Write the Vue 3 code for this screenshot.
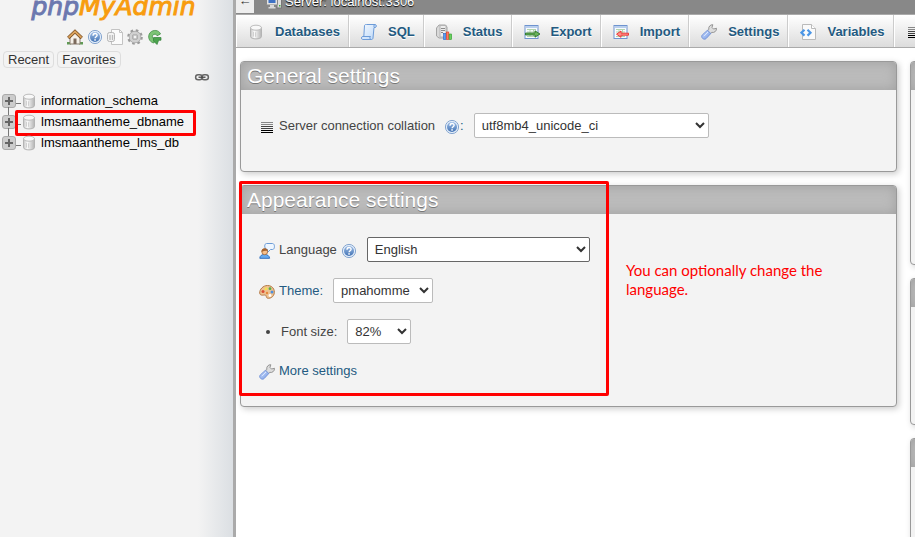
<script setup>
import { ref } from 'vue'

const databases = ['information_schema', 'lmsmaantheme_dbname', 'lmsmaantheme_lms_db']
const marked = 'lmsmaantheme_dbname'

const shortcuts = [
  { icon: 'home', label: 'Home' },
  { icon: 'help', label: 'Documentation' },
  { icon: 'docs', label: 'SQL documentation' },
  { icon: 'gear', label: 'Panel settings' },
  { icon: 'reload', label: 'Reload' }
]

const tabs = [
  { icon: 'db', label: 'Databases' },
  { icon: 'sql', label: 'SQL' },
  { icon: 'status', label: 'Status' },
  { icon: 'export', label: 'Export' },
  { icon: 'import', label: 'Import' },
  { icon: 'wrench', label: 'Settings' },
  { icon: 'vars', label: 'Variables' },
  { icon: 'lines', label: 'Charsets' }
]

const collation = ref('utf8mb4_unicode_ci')
const language = ref('English')
const theme = ref('pmahomme')
const fontSize = ref('82%')
</script>

<template>
  <svg class="sprite" aria-hidden="true">
    <defs>
      <linearGradient id="metal" x1="0" x2="1" y1="0" y2="0">
        <stop offset="0" stop-color="#c4c4c4" />
        <stop offset=".35" stop-color="#fafafa" />
        <stop offset="1" stop-color="#b4b4b4" />
      </linearGradient>
      <linearGradient id="blue" x1="0" x2="0" y1="0" y2="1">
        <stop offset="0" stop-color="#9dbde6" />
        <stop offset="1" stop-color="#4474b5" />
      </linearGradient>
      <linearGradient id="handle" x1="0" x2="1" y1="0" y2="1">
        <stop offset="0" stop-color="#c3d6fa" />
        <stop offset="1" stop-color="#7c9fe6" />
      </linearGradient>
      <linearGradient id="paper" x1="0" x2="1" y1="0" y2="1">
        <stop offset="0" stop-color="#f4f9ff" />
        <stop offset="1" stop-color="#bcd8f8" />
      </linearGradient>
    </defs>
    <symbol id="home" viewBox="0 0 16 16">
      <path d="M0 15.500V13h4v2.500zM12 15.500V13h4v2.500z" fill="#5f9a54" />
      <path d="M3 8l5-5 5 5v7H3z" fill="#f6f1ea" stroke="#8b7d70" stroke-width="1" />
      <path d="M6.500 15V9.500h3V15z" fill="#7c6a5c" />
      <path d="M1.200 9L8 2.500 14.800 9" fill="none" stroke="#7b4f23" stroke-width="3.200" />
      <path d="M1.500 8.700L8 2.500l6.500 6.200" fill="none" stroke="#dba25c" stroke-width="1.800" />
    </symbol>
    <symbol id="help" viewBox="0 0 16 16">
      <circle cx="8" cy="8" r="6.600" fill="#e3edf9" stroke="#86a6d0" />
      <circle cx="8" cy="8" r="5" fill="url(#blue)" />
      <path d="M6 6.700c0-2.900 4.200-2.800 4.100-.4 0 1.500-2 1.400-2 3" fill="none" stroke="#fff" stroke-width="1.400" />
      <rect x="7.300" y="10.200" width="1.500" height="1.500" fill="#fff" />
    </symbol>
    <symbol id="docs" viewBox="0 0 16 16">
      <path d="M4.500.5h8l3 3v12h-11z" fill="#fbfbfb" stroke="#c3c3c3" />
      <path d="M12.500.5v3h3" fill="none" stroke="#c3c3c3" />
      <rect x=".5" y="3.500" width="7" height="9" rx="2" fill="#f2f2f2" stroke="#b5b5b5" />
      <path d="M3 6v5M5.500 6v5" stroke="#bbb" stroke-width="1.300" />
    </symbol>
    <symbol id="gear" viewBox="0 0 16 16">
      <circle cx="8" cy="8" r="6.500" fill="none" stroke="#9a9a9a" stroke-width="2.600" stroke-dasharray="2.500 2.605" />
      <circle cx="8" cy="8" r="4.300" fill="none" stroke="#a2a2a2" stroke-width="3.800" />
      <circle cx="8" cy="8" r="4.300" fill="none" stroke="#d0d0d0" stroke-width="2.600" />
      <circle cx="8" cy="8" r="2" fill="#f3f3f3" stroke="#999" stroke-width=".7" />
    </symbol>
    <symbol id="reload" viewBox="0 0 16 16">
      <path d="M13.500 5C12 .8 6 .3 3.200 3.600.2 7 1.800 13 6.800 14l1.700-3.700c-4 .2-4.300-5-.5-5.100 1.200 0 1.800.8 2 1.600z" fill="#7cc475" stroke="#3f8d42" stroke-width=".8" />
      <path d="M6.500 8.500h7.500v2.700h-2.300L10 15.500 6.500 12z" fill="#4ba34d" stroke="#32803a" stroke-width=".7" />
    </symbol>
    <symbol id="chain" viewBox="0 0 16 16">
      <rect x="1.600" y="5.700" width="6.600" height="5" rx="2.500" fill="none" stroke="#666" stroke-width="1.500" />
      <rect x="7.800" y="5.700" width="6.600" height="5" rx="2.500" fill="none" stroke="#666" stroke-width="1.500" />
      <path d="M4.500 8.200h7" stroke="#444" stroke-width="1.300" />
    </symbol>
    <symbol id="db" viewBox="0 0 16 16">
      <path d="M2.500 3.500v9c0 3.200 11 3.200 11 0v-9z" fill="url(#metal)" stroke="#b4b4b4" />
      <ellipse cx="8" cy="3.700" rx="5.500" ry="2.500" fill="#f8f8f8" stroke="#bcbcbc" />
      <path d="M5.500 8v4.500M7.500 8.300v4.500" stroke="#d0d0d0" />
    </symbol>
    <symbol id="sql" viewBox="0 0 16 16">
      <path d="M3.500 1.500c.5-1 1-1 2-1h8.500c1.800 0 1.800 3 0 3h-1L12 14c-.2 1.500-1 1.500-2 1.500H1.500c-1.300 0-1.300-3 0-3h1.300z" fill="url(#paper)" stroke="#6c9bd8" />
      <path d="M14 .7c-1.500 0-1.300 2.800-.2 2.800M1.500 12.500h8c-.9.500-.9 2.500.3 2.800" fill="none" stroke="#6c9bd8" />
    </symbol>
    <symbol id="status" viewBox="0 0 16 16">
      <path d="M.5 4L3 1h6.500L11 3v9.500L8 14H3L.5 12z" fill="#d9d9d9" stroke="#a4a4a4" />
      <path d="M4 1.500h6V13H4z" fill="#ededed" stroke="#b4b4b4" />
      <path d="M5 4.500h4M5 6.500h4M5 8.500h2" stroke="#8a8a8a" />
      <rect x="7.500" y="9.500" width="2.500" height="6" fill="#5c9cf2" stroke="#2b64bb" stroke-width=".6" />
      <rect x="10.300" y="8" width="2.500" height="7.500" fill="#ff7b61" stroke="#dc3a22" stroke-width=".6" />
      <rect x="13.100" y="10" width="2.500" height="5.500" fill="#69d15e" stroke="#2c9a2c" stroke-width=".6" />
    </symbol>
    <symbol id="sheet" viewBox="0 0 16 16">
      <rect x="1" y="1.500" width="13" height="13" fill="#f8fbff" stroke="#6e93cf" />
      <path d="M2 3h11" stroke="#b9cfed" stroke-width="2" />
      <path d="M3 5.500h9M3 8h9M3 12.500h9M6 5v8M9.500 5v8" stroke="#b3d3ae" />
    </symbol>
    <symbol id="export" viewBox="0 0 16 16">
      <use href="#sheet" />
      <path d="M1.500 9h9.500V6.800L16 10l-5 3.200V11H1.500z" fill="#6bb35c" stroke="#226c1f" stroke-width=".8" />
    </symbol>
    <symbol id="import" viewBox="0 0 16 16">
      <use href="#sheet" />
      <path d="M15.500 9.200H8V7l-4.500 3.200L8 13.300v-2.100h7.500z" fill="#ff8f89" stroke="#ee2f2c" stroke-width=".9" />
    </symbol>
    <symbol id="wrench" viewBox="0 0 16 16">
      <path d="M7.800 5.500c-.6-2.700 1.500-5 4-4.800L11 3.500 12.500 5l3-.7c.2 2.700-2 4.700-4.900 4.100L9 10 6.200 7z" fill="#ddd" stroke="#8b8b8b" stroke-width=".9" />
      <path d="M6.500 6.200l3.300 3.300-4.600 5c-2.200 2.200-6-1.200-3.900-3.600z" fill="url(#handle)" stroke="#6f90d6" stroke-width=".9" />
      <path d="M3 12.200l4-4.200" stroke="#dfeaff" />
    </symbol>
    <symbol id="vars" viewBox="0 0 16 16">
      <path d="M2.500.5h9l4 4v11h-13z" fill="#fafafa" stroke="#bababa" />
      <path d="M11.500.5v4h4" fill="#fff" stroke="#bababa" />
      <path d="M4.500 5.800L1.500 8.700l3 2.900M7.500 5.800l3 2.900-3 2.900" fill="none" stroke="#4b96e6" stroke-width="2.200" />
    </symbol>
    <symbol id="lines" viewBox="0 0 16 16">
      <path d="M2 3.500h12M2 5.500h12" stroke="#888" />
      <path d="M2 7.500h12M2 9.500h12" stroke="#444" />
      <path d="M2 11.500h12M2 13.500h12" stroke="#000" />
    </symbol>
    <symbol id="person" viewBox="0 0 16 16">
      <path d="M7.500.5h6c2.600 0 2.600 6 0 6h-2L8.500 9.500v-3c-3.500 0-3.500-6-1-6z" fill="#eef6ff" stroke="#6a9bd6" />
      <path d="M.8 15.300c0-5.300 9.400-5.300 9.800 0z" fill="#65aaf0" stroke="#326fbd" />
      <circle cx="5.700" cy="8.800" r="2.900" fill="#f6c08c" stroke="#a4602a" stroke-width=".7" />
      <path d="M2.500 9c-.5-4.800 6.300-5 6.400-.8C7 7.500 5 8 2.500 9z" fill="#a5622d" />
    </symbol>
    <symbol id="palette" viewBox="0 0 16 16">
      <path d="M8.500 1.500c9 0 9 12.500 1 12.800-3.300 0-1.300-3-3.500-3.300-2 0-5 1-5.300-2C.5 5.500 4 1.500 8.500 1.500z" fill="#edc292" stroke="#b57a46" />
      <circle cx="4" cy="7.500" r="1.500" fill="#d94e35" />
      <circle cx="7" cy="4.700" r="1.500" fill="#f5e04e" />
      <circle cx="11" cy="4.700" r="1.400" fill="#57ad4d" />
      <circle cx="13" cy="8" r="1.500" fill="#4c8fe0" />
      <circle cx="11" cy="11.500" r="1.400" fill="#fff" />
      <circle cx="8" cy="9" r="1.200" fill="#e58a3c" />
    </symbol>
    <symbol id="server" viewBox="0 0 16 16">
      <rect x="11" y="1" width="4.500" height="13" fill="#ddd" stroke="#777" />
      <rect x="13" y="11" width="1.500" height="1.500" fill="#3fae3c" />
      <rect x=".5" y="1.500" width="11" height="9.500" rx="1" fill="#e3e3e3" stroke="#888" />
      <rect x="2.500" y="3.500" width="7" height="5.500" fill="#3f72c4" />
      <path d="M4 11h4v2H4zM2.500 13h7v1.500h-7z" fill="#d9d9d9" />
    </symbol>
  </svg>

  <div class="shell">
    <aside class="sidebar">
      <a class="logo" href="#" aria-label="phpMyAdmin"><span class="php">php</span><span>MyAdmin</span></a>
      <nav class="shortcuts">
        <a v-for="s in shortcuts" :key="s.icon" href="#" :aria-label="s.label">
          <svg class="icon"><use :href="'#' + s.icon" /></svg>
        </a>
      </nav>
      <div class="quick">
        <button type="button">Recent</button>
        <button type="button">Favorites</button>
      </div>
      <div class="link-row">
        <a href="#" aria-label="Unlink from main panel"><svg class="icon"><use href="#chain" /></svg></a>
      </div>
      <ul class="tree">
        <li v-for="db in databases" :key="db">
          <button type="button" class="expand" :aria-label="'Expand ' + db"></button>
          <span class="branch"></span>
          <svg class="icon"><use href="#db" /></svg>
          <a href="#">{{ db }}</a>
          <span v-if="db === marked" class="frame frame-db"></span>
        </li>
      </ul>
    </aside>

    <main class="main">
      <header class="server">
        <button type="button" class="back" aria-label="Hide panel">←</button>
        <svg class="icon"><use href="#server" /></svg>
        <a href="#">Server: localhost:3306</a>
      </header>
      <nav class="tabs">
        <a v-for="t in tabs" :key="t.label" href="#">
          <svg class="icon"><use :href="'#' + t.icon" /></svg>
          <span>{{ t.label }}</span>
        </a>
      </nav>

      <div class="columns">
        <div class="column">
          <section class="panel">
            <h2>General settings</h2>
            <div class="body">
              <div class="row">
                <svg class="icon"><use href="#lines" /></svg>
                <label for="collation">Server connection collation</label>
                <a href="#" class="help wide" aria-label="Collation help"><svg class="icon"><use href="#help" /></svg></a>
                <span class="colon">:</span>
                <select id="collation" v-model="collation" class="collation">
                  <option>utf8mb4_unicode_ci</option>
                </select>
              </div>
            </div>
          </section>

          <section class="panel">
            <h2>Appearance settings</h2>
            <div class="body appearance">
              <div class="row">
                <svg class="icon"><use href="#person" /></svg>
                <label for="language">Language</label>
                <a href="#" class="help" aria-label="Language help"><svg class="icon"><use href="#help" /></svg></a>
                <select id="language" v-model="language" class="language">
                  <option>English</option>
                </select>
              </div>
              <div class="row">
                <svg class="icon"><use href="#palette" /></svg>
                <label for="theme"><a href="#">Theme:</a></label>
                <select id="theme" v-model="theme" class="theme">
                  <option>pmahomme</option>
                </select>
              </div>
              <div class="row">
                <span class="bullet"></span>
                <label for="fontsize">Font size:</label>
                <select id="fontsize" v-model="fontSize" class="fontsize">
                  <option>82%</option>
                </select>
              </div>
              <div class="row more">
                <svg class="icon"><use href="#wrench" /></svg>
                <a href="#">More settings</a>
              </div>
            </div>
            <span class="frame frame-panel"></span>
            <p class="note">You can optionally change the language.</p>
          </section>
        </div>

        <div class="column side">
          <section class="panel tall"><div class="cap"></div></section>
          <section class="panel medium"><div class="cap"></div></section>
          <section class="panel tall"><div class="cap"></div></section>
        </div>
      </div>
    </main>
  </div>
</template>

<style>
body {
  overflow: hidden;
  background: #fff;
}
</style>

<style scoped>
* {
  box-sizing: border-box;
}
.sprite {
  position: absolute;
  width: 0;
  height: 0;
}
.shell {
  display: flex;
  height: 100vh;
  overflow: hidden;
  font: 13px/16px 'Liberation Sans', Arial, sans-serif;
  color: #444;
}
a {
  color: #235a81;
  text-decoration: none;
}
button {
  font: inherit;
  margin: 0;
  padding: 0;
}
.icon {
  display: block;
  flex: none;
  width: 16px;
  height: 16px;
}

.sidebar {
  flex: 0 0 236px;
  border-right: 3px solid #aaa;
  background: linear-gradient(to right, #f3f3f3 198px, #dbdfe3 233px);
}
.logo {
  display: flex;
  align-items: flex-end;
  justify-content: center;
  height: 22px;
  padding-right: 6px;
  font: oblique 25px/30px 'DejaVu Sans', sans-serif;
  color: #f89c0e;
  -webkit-text-stroke: 1px;
}
.php {
  color: #6c78af;
}
.shortcuts {
  display: flex;
  justify-content: center;
  gap: 4px;
  padding: 7px 3px 6px 0;
}
.quick {
  display: flex;
  gap: 3px;
  padding-left: 3px;
}
.quick button {
  height: 17px;
  padding: 0 4px;
  border: 1px solid #ddd;
  border-radius: 4px;
  background: #f3f3f3;
  color: #333;
  line-height: 15px;
}
.link-row {
  display: flex;
  justify-content: flex-end;
  padding: 1px 23px 5px 0;
}
.tree {
  margin: 0;
  padding: 0 0 0 2px;
  list-style: none;
}
.tree li {
  position: relative;
  display: flex;
  align-items: center;
  height: 21px;
}
.tree a {
  padding-left: 4px;
  color: #000;
}
.expand {
  width: 14px;
  height: 14px;
  border: 1px solid #aaa;
  border-radius: 3px;
  background:
    linear-gradient(#666, #666) center / 8px 2px no-repeat,
    linear-gradient(#666, #666) center / 2px 8px no-repeat,
    #ccc;
}
.tree li:not(:last-child)::after {
  content: '';
  position: absolute;
  left: 6px;
  top: 17px;
  width: 1px;
  height: 8px;
  background: #777;
}
.branch {
  width: 5px;
  height: 1px;
  margin-top: 6px;
  background: #777;
}
.frame {
  position: absolute;
  border: 3px solid #f00;
  border-radius: 2px;
  pointer-events: none;
}
.frame-db {
  left: 13px;
  top: -1px;
  width: 181px;
  height: 26px;
}

.main {
  flex: 1;
  min-width: 0;
  overflow: hidden;
}
.server {
  display: flex;
  align-items: flex-end;
  height: 14px;
  overflow: hidden;
  background: #888;
}
.server .icon {
  margin: 0 3px 4px 12px;
}
.server a {
  padding-bottom: 4px;
  color: #fff;
  text-shadow: 0 1px 1px #000;
}
.back {
  width: 18px;
  height: 24px;
  margin-bottom: 1px;
  border: 0;
  background: #eee;
  color: #333;
}
.tabs {
  display: flex;
  height: 34px;
  border-top: 1px solid #aaa;
  border-bottom: 1px solid #aaa;
  background: linear-gradient(#fff, #dcdcdc);
}
.tabs a {
  display: flex;
  flex: none;
  align-items: center;
  gap: 11px;
  padding: 1px 8px 0 11px;
  border-left: 1px solid #fff;
  border-right: 1px solid #ccc;
  font-weight: bold;
  text-shadow: 0 1px 0 #fff;
}
.columns {
  display: flex;
  gap: 13px;
  padding: 13px 0 0 4px;
}
.column {
  display: flex;
  flex: 1;
  flex-direction: column;
  gap: 13px;
  min-width: 0;
}
.side {
  flex: 0 0 5px;
}
.side .panel {
  width: 60px;
}
.tall {
  height: 204px;
}
.medium {
  height: 147px;
}
.panel {
  position: relative;
  border: 1px solid #999;
  border-radius: 4px;
  background: #f3f3f3;
  box-shadow: 2px 2px 6px #ccc;
}
h2,
.cap {
  height: 28px;
  margin: 0;
  padding: 0 6px;
  border-radius: 3px 3px 0 0;
  background: #bbb;
  box-shadow: inset 0 0 12px #a0a0a0;
  color: #fff;
  font-size: 21px;
  font-weight: normal;
  line-height: 27px;
  text-shadow: 0 1px 0 #777;
}
.body {
  padding: 23px 18px 33px;
}
.appearance {
  display: flex;
  flex-direction: column;
  gap: 16px;
  padding-bottom: 25px;
}
.row {
  display: flex;
  align-items: center;
  height: 25px;
}
.row > .icon {
  margin: 2px 4px 0 0;
}
.more {
  height: 21px;
}
.help {
  padding: 2px 0 0 4px;
}
.wide {
  padding-left: 9px;
}
.colon {
  color: #235a81;
}
.bullet {
  width: 4px;
  height: 4px;
  margin: 1px 11px 0 7px;
  border-radius: 50%;
  background: #444;
}
select {
  height: 25px;
  margin: 0 0 0 10px;
  padding: 3px;
  border: 1px solid #bbb;
  border-radius: 2px;
  background: #fff;
  color: #333;
  font: inherit;
}
.collation {
  width: 235px;
}
.language {
  width: 223px;
  border-color: #666;
}
.theme {
  width: 100px;
}
.fontsize {
  width: 64px;
}
.frame-panel {
  left: -2px;
  top: -5px;
  width: 370px;
  height: 215px;
}
.note {
  position: absolute;
  left: 385px;
  top: 75px;
  width: 216px;
  margin: 0;
  color: #f00;
  font: 15px/19px Lato, Carlito, sans-serif;
}
</style>
